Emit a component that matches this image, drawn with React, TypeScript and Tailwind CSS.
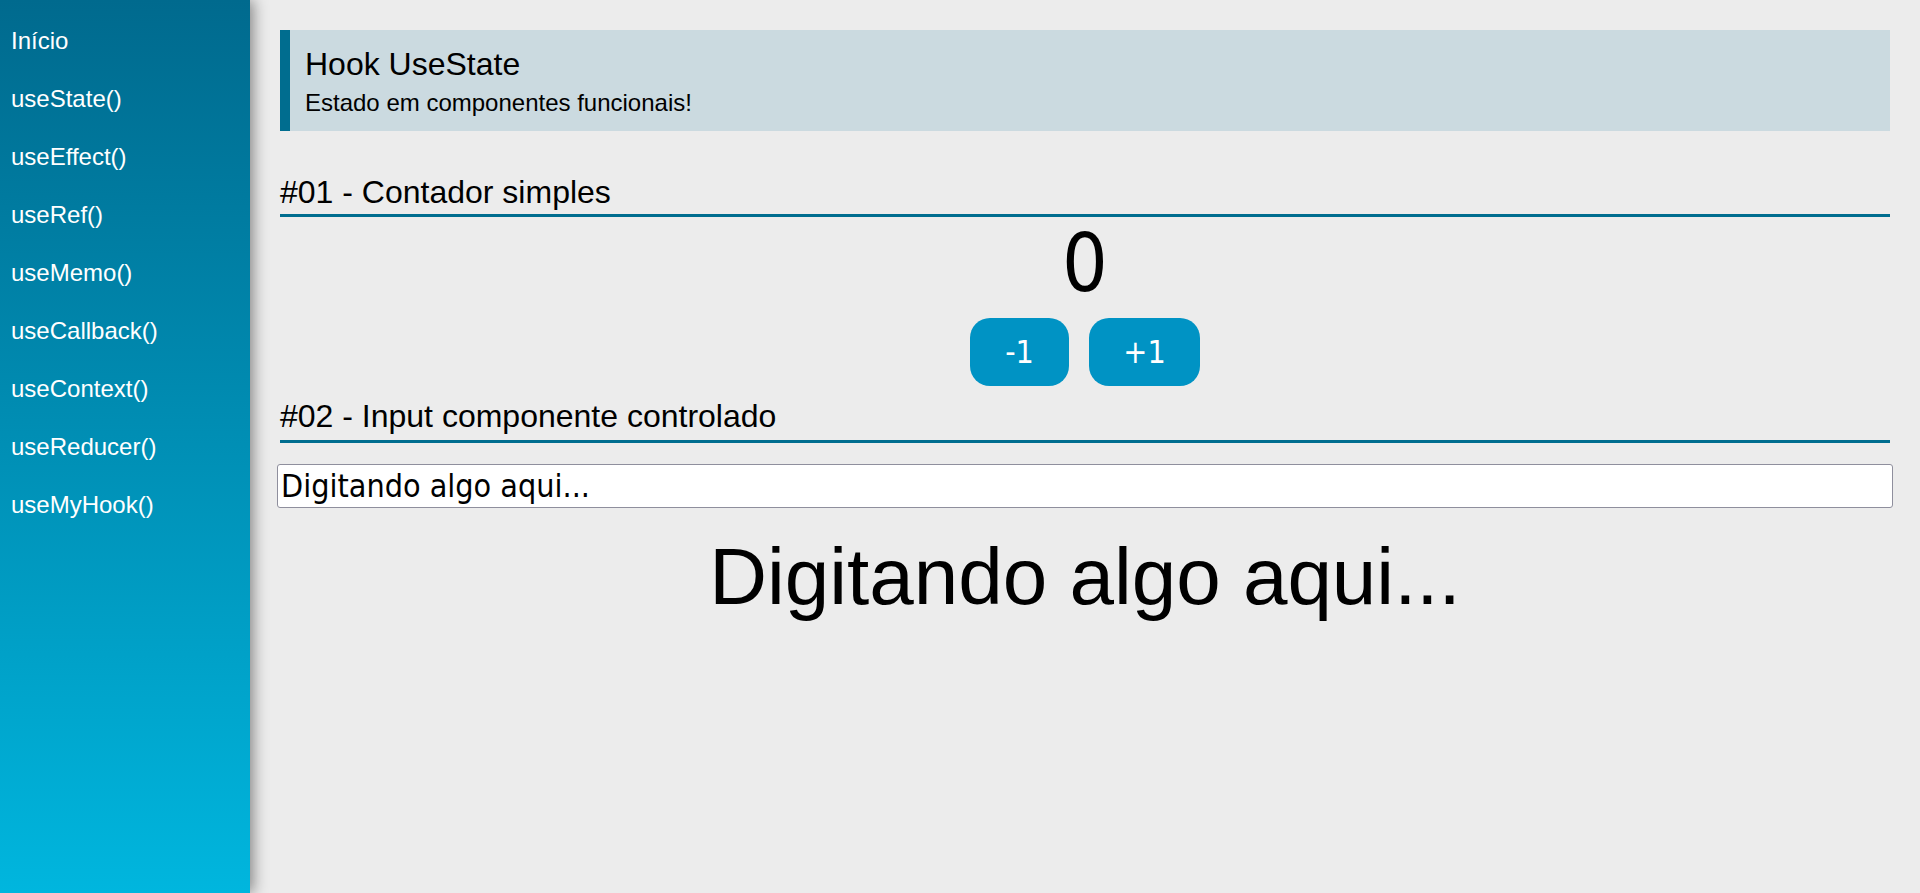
import { useState } from 'react'

const links = [
  'Início',
  'useState()',
  'useEffect()',
  'useRef()',
  'useMemo()',
  'useCallback()',
  'useContext()',
  'useReducer()',
  'useMyHook()',
]

function SectionTitle({ text, className = '' }: { text: string; className?: string }) {
  return (
    <h2 className={`text-[32px] leading-[37px] text-black border-b-[3px] border-[#006d8f] ${className}`}>
      {text}
    </h2>
  )
}

export default function App() {
  const [count, setCount] = useState(0)
  const [text, setText] = useState('Digitando algo aqui...')

  return (
    <div className="flex min-h-screen bg-[#ececec] font-['Liberation_Sans',Arial,sans-serif]">
      {/* Menu */}
      <aside className="relative z-10 w-[250px] shrink-0 pt-[12px] bg-gradient-to-b from-[#006a8e] to-[#00b6de] shadow-[3px_0_14px_rgba(0,0,0,0.45)]">
        <nav className="flex flex-col">
          {links.map((link) => (
            <a key={link} href="#" className="block px-[11px] py-[15px] text-[24px] leading-[28px] text-white">
              {link}
            </a>
          ))}
        </nav>
      </aside>

      {/* Content */}
      <main className="flex-1 min-w-0 px-[30px] pt-[30px]">
        <div className="border-l-[10px] border-[#006d8f] bg-[#cbdae0] pl-[15px] pt-[16px] pb-[14px]">
          <h1 className="text-[32px] leading-[37px] text-black">Hook UseState</h1>
          <p className="mt-[6px] text-[24px] leading-[28px] text-black">Estado em componentes funcionais!</p>
        </div>

        <SectionTitle text="#01 - Contador simples" className="mt-[43px] pb-[3px]" />
        <div className="flex flex-col items-center font-['DejaVu_Sans_Condensed','DejaVu_Sans',sans-serif]">
          <span className="text-[80px] leading-[93px] text-black">{count}</span>
          <div className="mt-[8px] flex gap-[20px]">
            <button
              onClick={() => setCount(count - 1)}
              className="h-[68px] w-[99px] rounded-[20px] bg-[#0093c4] text-[32px] text-white"
            >
              -1
            </button>
            <button
              onClick={() => setCount(count + 1)}
              className="h-[68px] w-[111px] rounded-[20px] bg-[#0093c4] text-[32px] text-white"
            >
              +1
            </button>
          </div>
        </div>

        <SectionTitle text="#02 - Input componente controlado" className="mt-[12px] pb-[5px]" />
        <input
          type="text"
          value={text}
          onChange={(e) => setText(e.target.value)}
          className="mt-[21px] -mx-[3px] block h-[44px] w-[calc(100%+6px)] rounded-[3px] border border-[#8f8f9d] bg-white px-[3px] text-[32px] text-black outline-none font-['DejaVu_Sans_Condensed','DejaVu_Sans',sans-serif]"
        />
        <p className="mt-[23px] text-center text-[80px] leading-[92px] text-black">{text}</p>
      </main>
    </div>
  )
}
